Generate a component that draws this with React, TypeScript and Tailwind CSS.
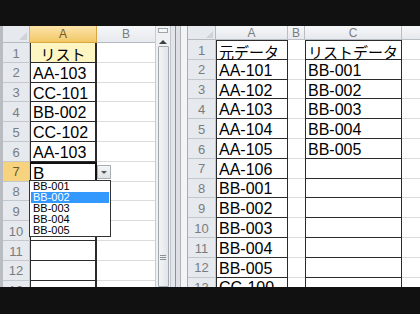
import React from "react";

const FONT = { fontFamily: '"Liberation Sans", Arial, "Noto Sans CJK JP", sans-serif' };
const JP = { fontFamily: '"Noto Sans CJK JP", "Liberation Sans", sans-serif' };

const leftData = ["リスト", "AA-103", "CC-101", "BB-002", "CC-102", "AA-103", "B", "", "", "", "", "", ""];
const rightA = ["元データ", "AA-101", "AA-102", "AA-103", "AA-104", "AA-105", "AA-106", "BB-001", "BB-002", "BB-003", "BB-004", "BB-005", "CC-100"];
const rightC = ["リストデータ", "BB-001", "BB-002", "BB-003", "BB-004", "BB-005", "", "", "", "", "", "", ""];
const dropItems = ["BB-001", "BB-002", "BB-003", "BB-004", "BB-005"];

function RowHead({ n, w, active }: { n: number; w: string; active?: boolean }) {
  return (
    <div
      className={`${w} h-full shrink-0 flex items-center justify-center border-b border-r border-[#c3c8ce] text-[13px] pt-[2px] ${
        active ? "bg-[#f7d37f] text-[#6a5a30]" : "bg-[#e6e9ed] text-[#7a7d80]"
      }`}
    >
      {n}
    </div>
  );
}

function LeftPane() {
  return (
    <div className="flex w-[170px] h-full shrink-0 overflow-hidden">
      <div className="w-[3px] h-full bg-[#b9bdc2] shrink-0" />
      <div className="w-[152px] flex flex-col shrink-0">
        <div className="flex h-[17px] shrink-0">
          <div className="w-[27px] h-full bg-[#e6e9ed] border-b border-r border-[#b5bac0] relative">
            <div className="absolute right-[2px] bottom-[2px] w-0 h-0 border-l-[8px] border-l-transparent border-b-[8px] border-b-[#cfd3d8]" />
          </div>
          <div className="w-[67px] h-full bg-gradient-to-b from-[#fbe3a8] to-[#f3c864] border-b border-r border-[#d7a842] flex items-center justify-center text-[12px] text-[#6d5a2c]">
            A
          </div>
          <div className="w-[58px] h-full bg-gradient-to-b from-[#f6f7f9] to-[#e6e9ed] border-b border-[#b5bac0] flex items-center justify-center text-[12px] text-[#7a7d80]">
            B
          </div>
        </div>
        {leftData.map((t, i) => (
          <div key={i} className="flex h-[19.8px] shrink-0">
            <RowHead n={i + 1} w="w-[27px]" active={i === 6} />
            <div
              className={`w-[67px] h-full shrink-0 border-l border-b border-r-2 border-[#2b2b2b] flex items-center pt-[3px] leading-none ${
                i === 0 ? "bg-[#fdf6c3] justify-center text-[15px]" : "bg-white pl-[2px] text-[16px]"
              } ${i === 6 ? "border-2 border-[#111] text-[17px]" : ""} text-black`}
              style={i === 0 ? JP : undefined}
            >
              {t}
            </div>
            <div className="w-[58px] h-full shrink-0 border-b border-[#dadcdf] bg-white" />
          </div>
        ))}
      </div>
      <div className="w-[15px] h-full shrink-0 bg-[#eef0f2] border-l border-[#c7ccd1] flex flex-col items-center">
        <div className="mt-[2px] w-[10px] h-[5px] border border-[#9ea4ab] bg-[#f4f5f6]" />
        <div className="mt-[7px] w-0 h-0 border-l-[4px] border-r-[4px] border-b-[4px] border-l-transparent border-r-transparent border-b-[#3d4044]" />
        <div className="mt-[2px] w-[11px] flex-1 bg-gradient-to-r from-[#f3f4f6] to-[#e2e5e9] border border-[#a3a9b0] rounded-[1px] flex items-start justify-center pt-[208px]">
          <div className="flex flex-col gap-[1px]">
            <div className="w-[6px] h-[1px] bg-[#8a9096]" />
            <div className="w-[6px] h-[1px] bg-[#8a9096]" />
            <div className="w-[6px] h-[1px] bg-[#8a9096]" />
          </div>
        </div>
      </div>
    </div>
  );
}

function Splitter() {
  return (
    <div className="flex w-[18px] h-full shrink-0">
      <div className="w-[5px] bg-[#e2e5e9] border-l border-[#c0c5cb]" />
      <div className="w-[1px] bg-[#8e9297]" />
      <div className="w-[4px] bg-[#dde0e4]" />
      <div className="w-[1px] bg-[#aeb3b9]" />
      <div className="w-[6px] bg-[#f3f4f6]" />
      <div className="w-[1px] bg-[#a8adb3]" />
    </div>
  );
}

function RightPane() {
  const hdr = "h-full flex items-center justify-center text-[12px] text-[#7a7d80] bg-gradient-to-b from-[#f6f7f9] to-[#e6e9ed] border-b border-r border-[#b9bec4]";
  return (
    <div className="flex flex-col flex-1 h-full overflow-hidden">
      <div className="flex h-[14px] shrink-0">
        <div className="w-[28px] shrink-0 h-full bg-[#e6e9ed] border-b border-r border-[#b5bac0] relative">
          <div className="absolute right-[2px] bottom-[1px] w-0 h-0 border-l-[7px] border-l-transparent border-b-[7px] border-b-[#cfd3d8]" />
        </div>
        <div className={`w-[72px] shrink-0 ${hdr}`}>A</div>
        <div className={`w-[17px] shrink-0 ${hdr}`}>B</div>
        <div className={`w-[97px] shrink-0 ${hdr}`}>C</div>
        <div className={`flex-1 ${hdr} border-r-0`} />
      </div>
      {rightA.map((a, i) => {
        const c = rightC[i];
        const jp = i === 0;
        return (
          <div key={i} className="flex h-[19.8px] shrink-0">
            <RowHead n={i + 1} w="w-[28px]" />
            <div
              className={`w-[72px] shrink-0 h-full bg-white border-l border-r border-b border-[#2b2b2b] ${i === 0 ? "border-t" : ""} flex items-center pl-[2px] pt-[3px] leading-none ${jp ? "text-[15px]" : "text-[16px]"} text-black`}
              style={jp ? JP : undefined}
            >
              {a}
            </div>
            <div className="w-[17px] shrink-0 h-full bg-white border-b border-[#dadcdf]" />
            <div
              className={`w-[97px] shrink-0 h-full bg-white border-l border-r border-b border-[#2b2b2b] ${i === 0 ? "border-t" : ""} flex items-center pl-[2px] pt-[3px] leading-none ${jp ? "text-[15px]" : "text-[16px]"} text-black`}
              style={jp ? JP : undefined}
            >
              {c}
            </div>
            <div className="flex-1 h-full bg-white border-b border-[#dadcdf]" />
          </div>
        );
      })}
    </div>
  );
}

export default function App() {
  return (
    <div className="w-[420px] h-[314px] bg-[#111111] flex flex-col" style={FONT}>
      <div className="h-[26px] shrink-0" />
      <div className="h-[261px] shrink-0 flex relative overflow-hidden bg-white">
        <LeftPane />
        <Splitter />
        <RightPane />
        {/* dropdown button */}
        <div className="absolute left-[97px] top-[139px] w-[14px] h-[14px] bg-gradient-to-b from-[#f4f5f6] to-[#dfe2e5] border border-[#a9aeb4] flex items-center justify-center">
          <div className="w-0 h-0 border-l-[3px] border-r-[3px] border-t-[3px] border-l-transparent border-r-transparent border-t-[#555]" />
        </div>
        {/* dropdown list */}
        <div className="absolute left-[29px] top-[154px] w-[82px] h-[57px] bg-white border border-[#333] px-[1px] flex flex-col">
          {dropItems.map((t, i) => (
            <div
              key={t}
              className={`h-[11px] shrink-0 flex items-center pl-[2px] text-[11px] leading-[11px] ${
                i === 1 ? "bg-[#3399ff] text-white" : "text-black"
              }`}
            >
              {t}
            </div>
          ))}
        </div>
      </div>
      <div className="flex-1" />
    </div>
  );
}
